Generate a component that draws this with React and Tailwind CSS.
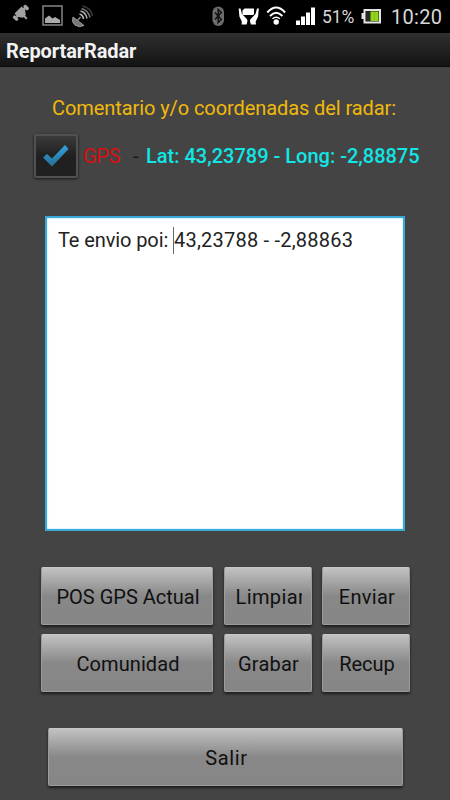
import clsx from 'clsx'

function StatusIcons() {
    return (
        <svg width="450" height="33" viewBox="0 0 450 33" className="absolute inset-0">
            {/* plug */}
            <g transform="translate(21.2 13.2) rotate(-45)" fill="#a3a3a3">
                <path d="M-5 -4.500h10v5l-3 4h-4l-3 -4z" />
                <rect x="-9.200" y="-3.500" width="3.400" height="6" rx="1.200" />
                <rect x="-6" y="-2" width="12" height="2.500" />
                <rect x="5.800" y="-3.500" width="3.400" height="6" rx="1.200" />
                <rect x="-1" y="3" width="2" height="5" />
            </g>
            {/* gallery */}
            <rect x="43" y="6" width="19" height="19" fill="none" stroke="#858585" strokeWidth="1.500" />
            <path d="M45 23v-4.500l4 -3 3.500 3 2.500 -1.500 5 3v3z" fill="#aaa" />
            {/* satellite dish */}
            <path d="M73 17l11 8.500q-5 2.500 -9 -.5t-2 -8z" fill="#777" stroke="#999" strokeWidth="1" />
            <g fill="none" strokeWidth="1.600">
                <path d="M77.500 20.500l3 -3.500" stroke="#888" />
                <path d="M79.500 14q3.500 1 4 5" stroke="#bbb" />
                <path d="M80.500 11q5.500 1.500 6.500 7.500" stroke="#aaa" />
                <path d="M81.500 8.500q7 2 8.500 9" stroke="#777" />
                <path d="M82.500 6q8.500 2 10 10" stroke="#3c3c3c" />
            </g>
            {/* bluetooth */}
            <rect x="212.500" y="6.500" width="11.500" height="19.500" rx="5.700" fill="#6c6c6c" />
            <path d="M215 12.500l6.300 7 -3.100 3v-13l3.100 3 -6.300 7" fill="none" stroke="#111" strokeWidth="1.500" />
            {/* hands around the phone */}
            <g fill="#fff">
                <path d="M244.500 8.500h9.500v5q0 1.500 -1.500 1.500h-10v-4.500z" />
                <path d="M238.700 8.500h1.800l1.500 5.500 4.800 5q1 1 .6 2.500l-.8 3h-5l.2 -3 -2.400 -5z" />
                <path d="M258.800 8.500h-1.800l-1.500 5.500 -4.800 5q-1 1 -.6 2.500l.8 3h5l-.2 -3 2.400 -5z" />
            </g>
            {/* wifi */}
            <g fill="none" stroke="#fff" strokeWidth="2">
                <path d="M267.300 12.500q8.900 -9.800 17.800 0" />
                <path d="M270 16q6.200 -6.500 12.400 0" />
                <path d="M272.500 18.800q3.700 -3.200 7.400 0" strokeWidth="1.500" />
                <circle cx="276.200" cy="22" r="2.700" fill="#fff" stroke="none" />
            </g>
            {/* signal */}
            <path d="M296 20.500h4v4.500h-4zM301 16.500h4v8.500h-4zM306 12.500h4v12.500h-4zM311 7.500h4v17.500h-4z" fill="#fff" />
            {/* battery */}
            <path d="M361.500 13h2.500v6h-2.500z" fill="#e5e5e5" />
            <rect x="364.500" y="10" width="15.500" height="12.500" fill="#181818" stroke="#e5e5e5" strokeWidth="2" />
            <rect x="366" y="11.500" width="4.500" height="9.500" fill="#252b20" />
            <rect x="370.500" y="11.500" width="8" height="9.500" fill="#91d51b" />
            <path d="M374.500 11.500v9.500" stroke="#78b81a" strokeWidth="0.600" />
        </svg>
    )
}

function Button({ children, className, textClass }) {
    return (
        <button
            className={clsx(
                'flex h-[58px] items-center justify-center rounded-[2px] border border-[#9c9c9c] border-t-[#c8c8c8] bg-linear-to-b from-[#c2c2c2] via-[#888] via-50% to-[#868686] pt-[2px] pl-[2px] text-[20px] leading-6 text-[#101010] shadow-[0_2px_3px_rgba(0,0,0,0.6)]',
                className
            )}
        >
            <span className={clsx('block whitespace-nowrap', textClass)}>{children}</span>
        </button>
    )
}

export default function App() {
    return (
        <div className="flex h-[800px] w-[450px] flex-col overflow-hidden bg-[#444] font-['Roboto',sans-serif]">
            <div className="relative h-[33px] shrink-0 bg-black text-[#d8d8d8]">
                <StatusIcons />
                <div className="flex h-[33px] items-center pl-[322px]">
                    <span className="w-[69px] pt-px text-[17.5px] tracking-[-0.1px]">51%</span>
                    <span className="text-[20px] tracking-[0.3px] whitespace-nowrap">10:20</span>
                </div>
            </div>
            <div className="flex h-[34px] shrink-0 items-center border-b border-[#0c0c0c] bg-linear-to-b from-[#303030] to-[#141414] pt-[3px] pl-[6px]">
                <h1 className="text-[20px] leading-6 font-bold tracking-[-0.1px] text-[#f3f3f3]">ReportarRadar</h1>
            </div>

            <div className="mt-[29px] pl-[52px] text-[20px] leading-6 tracking-[-0.08px] whitespace-nowrap text-[#f0b90b]">
                Comentario y/o coordenadas del radar:
            </div>

            <div className="mt-[13px] flex h-[46px] items-center pl-[34px] text-[20px] whitespace-nowrap">
                <div className="flex h-[44px] w-[44px] items-center justify-center rounded-[3px] border-2 border-[#505050] bg-linear-to-b from-[#3b3b3b] via-[#202020] via-50% to-[#202020] shadow-[0_1px_3px_rgba(0,0,0,0.7)]">
                    <svg width="40" height="40" viewBox="36 136 40 40">
                        <defs>
                            <linearGradient id="tick" x1="0" y1="0" x2="0" y2="1">
                                <stop offset="0" stopColor="#32a3dc" />
                                <stop offset="1" stopColor="#256e93" />
                            </linearGradient>
                        </defs>
                        <path d="M43 157.500l4 -3.500 5 4.500 13 -13.500 3.500 4 -16.500 17.500z" fill="url(#tick)" />
                    </svg>
                </div>
                <span className="ml-[5px] w-[50px] tracking-[-0.3px] text-[#d81010]">GPS</span>
                <span className="w-[13px] text-[#161616]">-</span>
                <span className="font-medium text-[#10e6e6]">Lat: 43,23789 - Long: -2,88875</span>
            </div>

            <div className="mt-[37px] ml-[45px] h-[315px] w-[360px] shrink-0 border-2 border-[#38a9d8] bg-white pt-[8px] pl-[11px] text-[20px] text-[#222] shadow-[inset_0_0_2px_#8ddcff]">
                <div className="flex h-[28px] items-center whitespace-nowrap">
                    <span className="w-[115px] tracking-[-0.1px]">Te envio poi:</span>
                    <span className="h-[27px] w-px bg-[#666]" />
                    <span className="tracking-[0.22px]">43,23788 - -2,88863</span>
                </div>
            </div>

            <div className="mt-[36px] ml-[41px] grid grid-cols-[172px_88px_88px] gap-x-[10.500px] gap-y-[9px]">
                <Button>POS GPS Actual</Button>
                {/* the label is wider than its slot and loses the tail of its last letter */}
                <Button textClass="w-[66px] overflow-hidden text-left tracking-[0.4px]">Limpiar</Button>
                <Button textClass="tracking-[0.3px]">Enviar</Button>
                <Button textClass="tracking-[0.1px]">Comunidad</Button>
                <Button textClass="tracking-[0.2px]">Grabar</Button>
                <Button>Recup</Button>
            </div>

            <Button className="mt-[36px] ml-[48px] w-[355px] shrink-0" textClass="tracking-[0.6px]">Salir</Button>
        </div>
    )
}
